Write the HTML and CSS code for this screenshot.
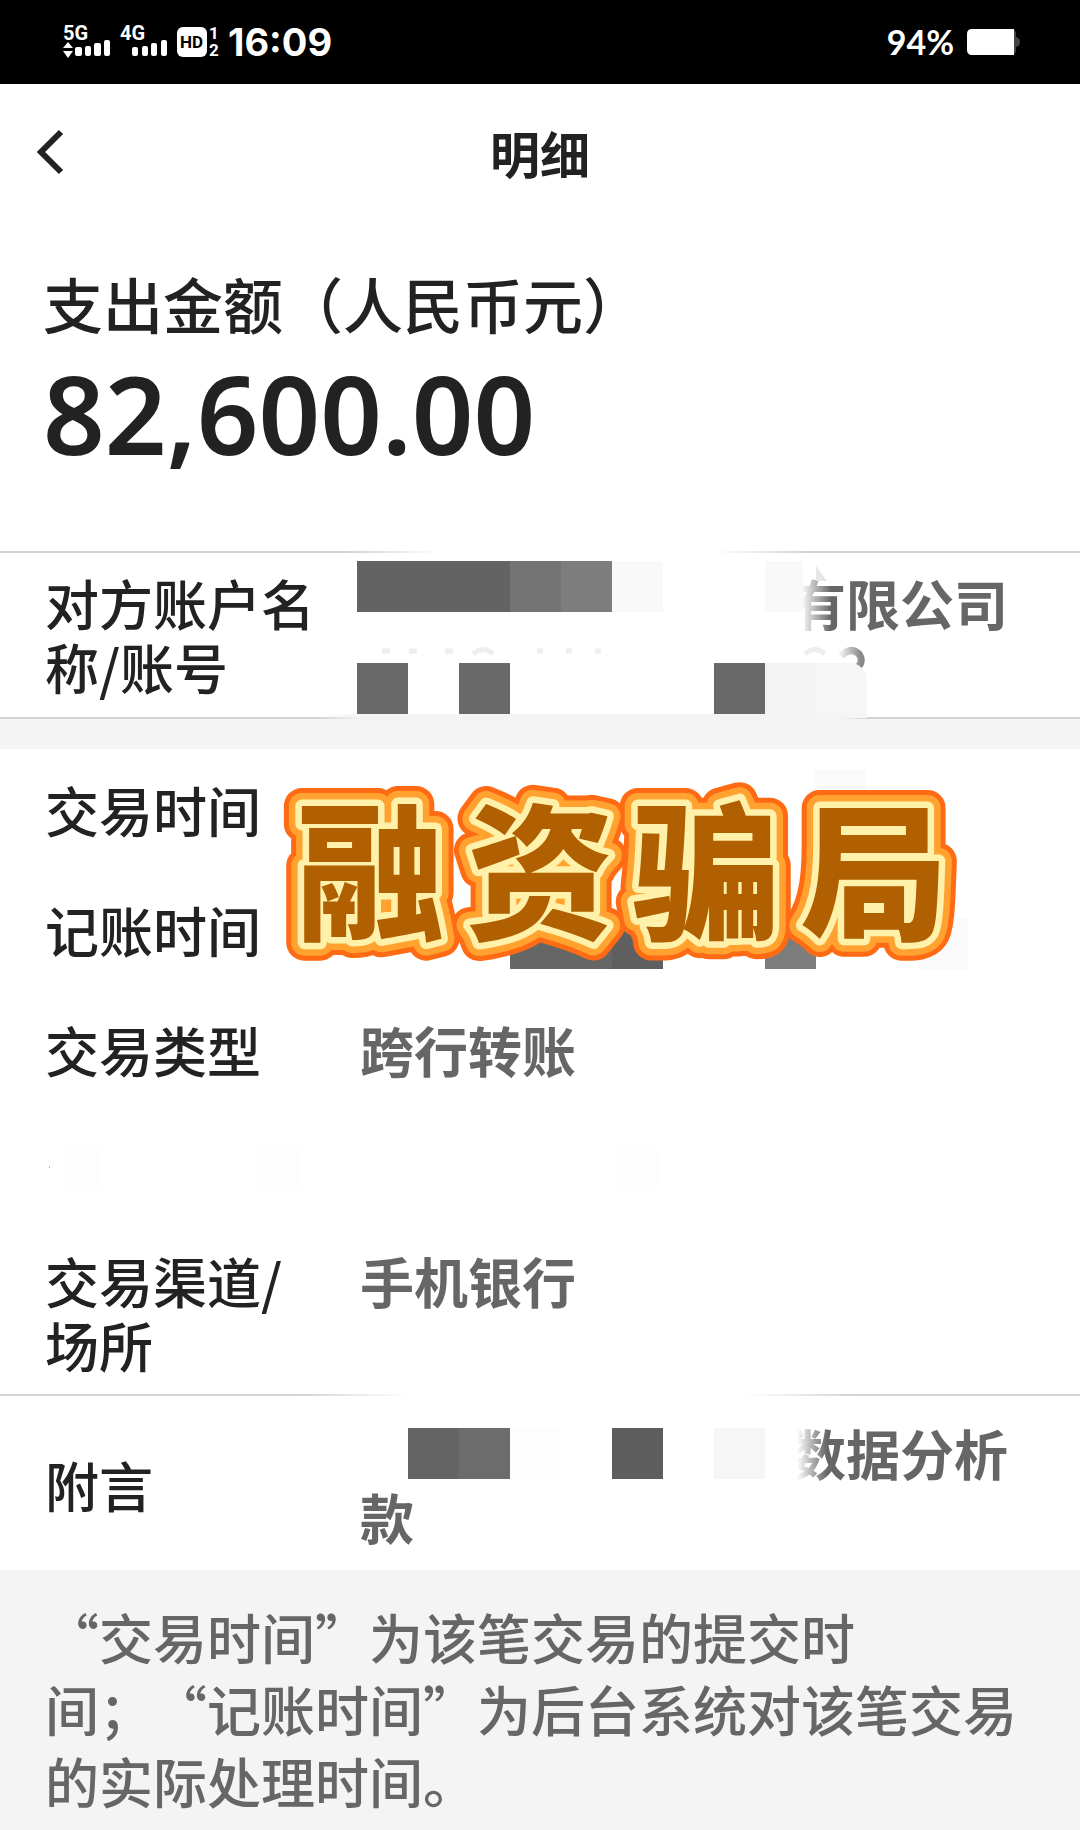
FILE: index.html
```html
<!DOCTYPE html>
<html lang="zh-CN">
<head>
  <meta charset="UTF-8" />
  <meta name="viewport" content="width=device-width, initial-scale=1.0">
  <title>明细</title>
  <link rel="stylesheet" href="styles.css">
</head>
<body>
  <div class="status-bar">
    <div class="status-left">
      <svg class="signals" width="158" height="40" viewBox="0 0 158 40" fill="#fff">
        <text class="net" x="0" y="18">5G</text>
        <path d="M0 26 L5 20 L10 26 Z M0 29 H10 L5 36 Z" />
        <rect x="12" y="25" width="7" height="9" rx="2" />
        <rect x="22" y="24" width="6" height="10" rx="2" />
        <rect x="31" y="21" width="7" height="13" rx="2" />
        <rect x="41" y="18" width="6" height="16" rx="2" />
        <text class="net" x="57" y="18">4G</text>
        <rect x="69" y="25" width="6" height="9" rx="2" />
        <rect x="79" y="24" width="6" height="10" rx="2" />
        <rect x="88" y="21" width="6" height="13" rx="2" />
        <rect x="98" y="18" width="6" height="16" rx="2" />
        <rect x="114" y="5" width="30" height="30" rx="6" />
        <text class="hd" x="117" y="26">HD</text>
        <text class="sim" x="146" y="17">1</text>
        <text class="sim" x="146" y="34">2</text>
      </svg>
      <time>16:09</time>
    </div>
    <div class="status-right">
      <span>94%</span>
      <svg width="54" height="28" viewBox="0 0 54 28">
        <path d="M40 1 H45 Q50 1 50 6 V9 Q54 10 54 14 Q54 18 50 19 V22 Q50 27 45 27 H40 Z" fill="#444" />
        <path d="M6 1 H48 V27 H6 Q1 27 1 22 V6 Q1 1 6 1 Z" fill="#fff" />
      </svg>
    </div>
  </div>

  <header class="nav">
    <button class="back" type="button" aria-label="返回">
      <svg width="28" height="46" viewBox="0 0 28 46" fill="none" stroke="#222" stroke-width="6">
        <path d="M24 3 L4 23 L24 43" />
      </svg>
    </button>
    <h1>明细</h1>
  </header>

  <main>
    <section class="summary">
      <p class="summary-label">支出金额（人民币元）</p>
      <p class="amount">82,600.00</p>
    </section>

    <dl class="party">
      <div class="row">
        <dt>对方账户名称/账号</dt>
        <dd>
          <span class="masked"></span>有限公司
          <svg class="mosaic" width="660" height="170" viewBox="0 0 660 170">
            <defs>
              <linearGradient id="fade">
                <stop offset="0" stop-color="#fff" />
                <stop offset="0.4" stop-color="#fff" />
                <stop offset="1" stop-color="#fff" stop-opacity="0" />
              </linearGradient>
              <linearGradient id="fadeEnds">
                <stop offset="0" stop-color="#fff" stop-opacity="0" />
                <stop offset="0.2" stop-color="#fff" />
                <stop offset="0.8" stop-color="#fff" />
                <stop offset="1" stop-color="#fff" stop-opacity="0" />
              </linearGradient>
              <linearGradient id="bandEnds">
                <stop offset="0" stop-color="#f4f4f4" stop-opacity="0" />
                <stop offset="0.08" stop-color="#f4f4f4" />
                <stop offset="0.95" stop-color="#f4f4f4" />
                <stop offset="1" stop-color="#f4f4f4" stop-opacity="0" />
              </linearGradient>
              <linearGradient id="digit">
                <stop offset="0" stop-color="#eee" />
                <stop offset="1" stop-color="#888" />
              </linearGradient>
            </defs>
            <rect x="-10" y="-2" width="460" height="4" fill="url(#fadeEnds)" />
            <rect x="424" y="9" width="50" height="80" fill="url(#fade)" />
            <rect x="0" y="9" width="153" height="51" fill="#636363" />
            <rect x="153" y="9" width="51" height="51" fill="#747474" />
            <rect x="204" y="9" width="51" height="51" fill="#7d7d7d" />
            <rect x="255" y="9" width="51" height="51" fill="#f9f9f9" />
            <rect x="408" y="9" width="38" height="51" fill="#f9f9f9" />
            <path d="M459 14 L470 29 H459 Z" fill="#e6e6e6" />
            <path d="M25 99 h8 M52 99 h8 M88 99 h8 M116 102 q10 -9 20 0 M180 99 h6 M209 99 h6 M238 99 h6" fill="none" stroke="#eee" stroke-width="5" />
            <path d="M448 102 q10 -9 20 0" fill="none" stroke="#eee" stroke-width="5" />
            <path d="M484 104 Q494 94 502 102 Q508 111 498 117" fill="none" stroke="url(#digit)" stroke-width="7" />
            <rect x="0" y="111" width="51" height="51" fill="#696969" />
            <rect x="102" y="111" width="51" height="51" fill="#696969" />
            <rect x="357" y="111" width="51" height="51" fill="#696969" />
            <rect x="408" y="111" width="51" height="55" fill="#f3f3f3" />
            <path d="M459 111 H496 Q510 115 510 131 V166 H459 Z" fill="#f6f6f6" />
            <rect x="-40" y="162" width="550" height="6" fill="url(#bandEnds)" />
          </svg>
        </dd>
      </div>
    </dl>

    <dl class="details">
      <div class="row"><dt>交易时间</dt><dd></dd></div>
      <div class="row"><dt>记账时间</dt><dd></dd></div>
      <div class="row"><dt>交易类型</dt><dd>跨行转账</dd></div>
      <div class="row row-empty">
        <svg width="780" height="55" viewBox="0 0 780 55" fill="#fdfdfd">
          <rect x="4" y="28" width="1" height="2" fill="#bbb" />
          <rect x="20" y="12" width="36" height="36" />
          <rect x="212" y="12" width="44" height="36" />
          <rect x="570" y="12" width="44" height="36" />
        </svg>
      </div>
      <div class="row"><dt>交易渠道/场所</dt><dd>手机银行</dd></div>

      <svg class="sticker" width="760" height="240" viewBox="0 0 760 240">
        <defs>
          <text id="stickerText" x="37 206 372 540" y="179">融资骗局</text>
        </defs>
        <rect x="555" y="20" width="51" height="48" fill="#fafafa" />
        <rect x="658" y="169" width="50" height="51" fill="#fafafa" />
        <rect x="250" y="169" width="102" height="51" fill="#666" />
        <rect x="352" y="169" width="51" height="51" fill="#5f5f5f" />
        <rect x="505" y="169" width="51" height="51" fill="#7d7d7d" />
        <use href="#stickerText" class="ring ring-outer" />
        <use href="#stickerText" class="ring ring-middle" />
        <use href="#stickerText" class="ring ring-inner" />
        <use href="#stickerText" class="ring-fill" />
      </svg>
    </dl>

    <dl class="remark">
      <div class="row">
        <dt>附言</dt>
        <dd>
          <span class="masked"></span>数据分析<br>款
          <svg class="mosaic" width="660" height="120" viewBox="0 0 660 120">
            <rect x="-60" y="-2" width="560" height="4" fill="url(#fadeEnds)" />
            <rect x="420" y="20" width="50" height="80" fill="url(#fade)" />
            <rect x="51" y="34" width="51" height="51" fill="#646464" />
            <rect x="102" y="34" width="51" height="51" fill="#6c6c6c" />
            <rect x="153" y="34" width="51" height="51" fill="#fdfdfd" />
            <rect x="255" y="34" width="51" height="51" fill="#5d5d5d" />
            <rect x="357" y="34" width="51" height="51" fill="#f6f6f6" />
          </svg>
        </dd>
      </div>
    </dl>
  </main>

  <footer class="note">
    “交易时间”为该笔交易的提交时<br>间；“记账时间”为后台系统对该笔交易<br>的实际处理时间。
  </footer>
</body>
</html>
```

FILE: styles.css
```css
* {
  margin: 0;
  padding: 0;
  box-sizing: border-box;
}

body {
  font-family: "Noto Sans CJK SC", sans-serif;
  font-size: 54px;
  line-height: 64px;
  color: #222;
  background: #f4f4f4;
  min-height: 100vh;
  text-spacing-trim: space-all;
}

svg {
  display: block;
}

/* 状态栏 */
.status-bar {
  display: flex;
  align-items: center;
  justify-content: space-between;
  height: 84px;
  padding: 0 60px 0 63px;
  background: #000;
  color: #fff;
  font-family: Inter, sans-serif;
}

.status-left,
.status-right {
  display: flex;
  align-items: center;
  gap: 7px;
}

.status-left time {
  font-size: 38px;
  font-weight: 700;
}

.status-right {
  gap: 12px;
  font-family: Lato, sans-serif;
  font-size: 34px;
  font-weight: 700;
}

.signals text {
  font-family: Roboto, sans-serif;
  font-weight: 700;
}

.signals .net {
  font-size: 20px;
}

.signals .hd {
  font-size: 17px;
  fill: #000;
}

.signals .sim {
  font-size: 17px;
}

/* 标题栏 */
.nav {
  display: grid;
  grid-template-columns: 1fr auto 1fr;
  align-items: center;
  height: 135px;
  padding: 0 37px;
  background: #fff;
}

.back {
  width: 28px;
  border: none;
  background: none;
  cursor: pointer;
}

.nav h1 {
  font-size: 50px;
  font-weight: 700;
}

/* 金额 */
.summary {
  padding: 42px 43px 68px;
  background: #fff;
}

.summary-label {
  font-size: 60px;
  font-weight: 500;
  line-height: 84px;
}

.amount {
  font-family: "Noto Sans", sans-serif;
  font-size: 108px;
  font-weight: 600;
  line-height: 138px;
}

/* 明细列表 */
.row {
  display: flex;
  gap: 29px;
}

.row dt {
  width: 286px;
  flex-shrink: 0;
  font-weight: 500;
}

.row dd {
  position: relative;
  flex: 1;
  font-weight: 700;
  color: #666;
}

.party {
  padding: 18px 45px;
  background: #fff;
  border-top: 2px solid #d3d3d3;
  border-bottom: 2px solid #d3d3d3;
}

.details {
  display: flex;
  flex-direction: column;
  gap: 56px;
  position: relative;
  margin-top: 30px;
  padding: 29px 45px 17px;
  background: #fff;
}

.row-empty {
  height: 55px;
}

.remark {
  padding: 25px 45px 21px;
  background: #fff;
  border-top: 2px solid #d3d3d3;
}

.remark .row {
  align-items: center;
}

/* 打码 */
.masked {
  display: inline-block;
  width: 8em;
}

.mosaic {
  position: absolute;
  left: -3px;
  overflow: visible;
}

.party .mosaic {
  top: -19px;
}

.remark .mosaic {
  top: -27px;
}

/* 贴纸文字 */
.sticker {
  position: absolute;
  top: 0;
  left: 260px;
  font-size: 148px;
  font-weight: 900;
}

.ring {
  stroke-linejoin: round;
}

.ring-outer {
  fill: #ff6b14;
  stroke: #ff6b14;
  stroke-width: 36px;
}

.ring-middle {
  fill: #ffa230;
  stroke: #ffa230;
  stroke-width: 26px;
}

.ring-inner {
  fill: #fff0aa;
  stroke: #fff0aa;
  stroke-width: 13px;
}

.ring-fill {
  fill: #b06000;
}

/* 底部说明 */
.note {
  padding: 31px 45px;
  font-weight: 500;
  line-height: 72px;
  color: #666;
}
```
